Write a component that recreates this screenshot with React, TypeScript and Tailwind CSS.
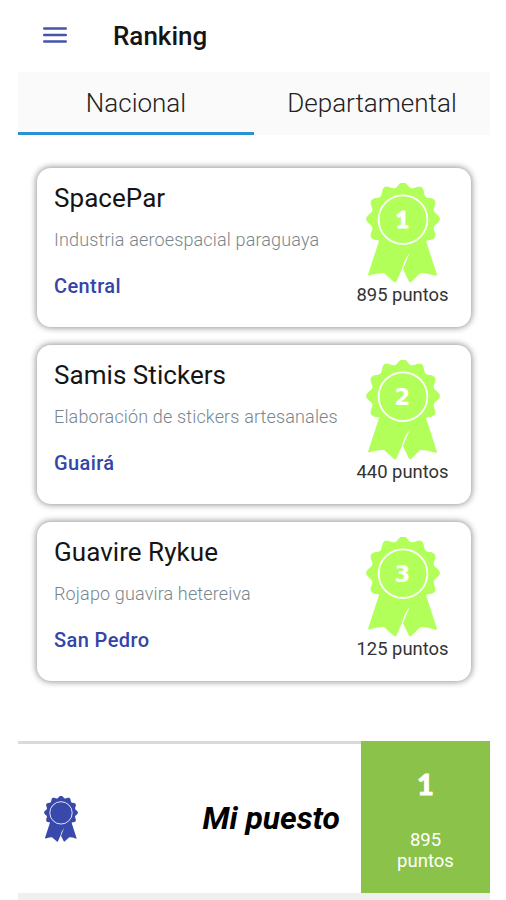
const entries = [
  { place: "1", name: "SpacePar", about: "Industria aeroespacial paraguaya", region: "Central", points: "895 puntos" },
  { place: "2", name: "Samis Stickers", about: "Elaboración de stickers artesanales", region: "Guairá", points: "440 puntos" },
  { place: "3", name: "Guavire Rykue", about: "Rojapo guavira hetereiva", region: "San Pedro", points: "125 puntos" },
];

// Twelve-lobed rosette outline around (111, 108)
const rosette =
  "M" +
  Array.from({ length: 240 }, (_, i) => {
    const a = (i / 240) * Math.PI * 2;
    const r = 103 + 7.5 * Math.cos(12 * a);
    return `${(111 + r * Math.cos(a)).toFixed(2)} ${(108 + r * Math.sin(a)).toFixed(2)}`;
  }).join("L") +
  "Z";

function Ribbon({ className, place }: { className: string; place?: string }) {
  return (
    <svg viewBox="0 0 222 300" className={className} aria-hidden="true">
      <g fill="currentColor">
        <path d={rosette} />
        <path d="M41 168L7 272Q5 279 12 277Q39 269 54 270L84 297Q89 301 92 294L108 257Q114 231 131 209L111 259L128 294Q131 301 136 296L163 270Q184 269 207 278Q215 280 212 272L178 168Z" />
      </g>
      <circle cx="111" cy="110" r="73" fill="none" stroke="white" strokeWidth="5.5" />
      {place && (
        <text
          x="109"
          y="134"
          textAnchor="middle"
          fill="white"
          stroke="white"
          strokeWidth={place === "1" ? 3 : 0}
          fontSize={place === "1" ? 70 : 68}
          fontWeight="900"
          fontFamily={place === "1" ? "Lato, sans-serif" : "'DejaVu Sans', sans-serif"}
        >
          {place}
        </text>
      )}
    </svg>
  );
}

export default function App() {
  return (
    <div className="flex h-[900px] w-[506px] flex-col overflow-hidden bg-white pl-[18px] pr-4 font-['Roboto','Liberation_Sans',sans-serif] text-[#151515]">
      <header className="flex h-[72px] shrink-0 items-center pl-[25px]">
        <button aria-label="Menú">
          <svg viewBox="0 0 24 18" className="mb-0.5 h-[18px] w-6" stroke="#4553ac" strokeWidth="2.6" strokeLinecap="round">
            <path d="M1.3 2.5H22.7M1.3 9H22.7M1.3 15.5H22.7" />
          </svg>
        </button>
        <h1 className="ml-[46px] text-[26px] font-medium">Ranking</h1>
      </header>

      <nav className="grid h-[63px] shrink-0 grid-cols-2 bg-[#fafafa] text-center text-[26px] font-light leading-[62px] text-[#222]">
        <span className="h-[63px] border-b-[3px] border-[#2a92d2]">Nacional</span>
        <span>Departamental</span>
      </nav>

      <main className="mt-[33px] flex shrink-0 flex-col gap-[18px] pl-[19px] pr-[19px]">
        {entries.map((e) => (
          <article key={e.place} className="flex h-[159px] justify-between rounded-[14px] bg-white pl-[17px] pr-[22px] shadow-[0_0_6px_1px_rgba(0,0,0,0.42)]">
            <div className="flex flex-col whitespace-nowrap pt-[14px]">
              <h2 className="text-[26px] leading-8 tracking-[0.05px]">{e.name}</h2>
              <p className="mt-[14px] text-[18px] font-light leading-6 tracking-[0.15px] text-[#78868c]">{e.about}</p>
              <p className="mt-[22px] text-[20px] font-medium leading-6 tracking-[0.4px] text-[#3444a8]">{e.region}</p>
            </div>
            <div className="flex w-[93px] flex-col items-center pt-[15px]">
              <Ribbon place={e.place} className="h-[100px] w-[74px] text-[#b2ff59]" />
              <p className="whitespace-nowrap text-[18.4px] leading-6 text-[#333]">{e.points}</p>
            </div>
          </article>
        ))}
      </main>

      <footer className="mt-[60px] flex h-[152px] shrink-0">
        <div className="flex flex-1 items-center justify-between border-t-[3px] border-[#dadada] pl-[26px] pr-[21px]">
          <Ribbon className="h-[46px] w-[34px] text-[#3949ab]" />
          <p className="text-[31.8px] font-bold italic text-black">Mi puesto</p>
        </div>
        <div className="flex w-[129px] flex-col items-center bg-[#8bc34a] text-white">
          <strong className="mt-[25px] font-['Lato',sans-serif] text-[29px] font-black leading-9 [-webkit-text-stroke:0.8px_white]">1</strong>
          <p className="mt-[28px] text-center text-[18.5px] leading-[21px]">
            895
            <br />
            puntos
          </p>
        </div>
      </footer>
      <div className="h-[7px] shrink-0 bg-[#efefef]" />
    </div>
  );
}
